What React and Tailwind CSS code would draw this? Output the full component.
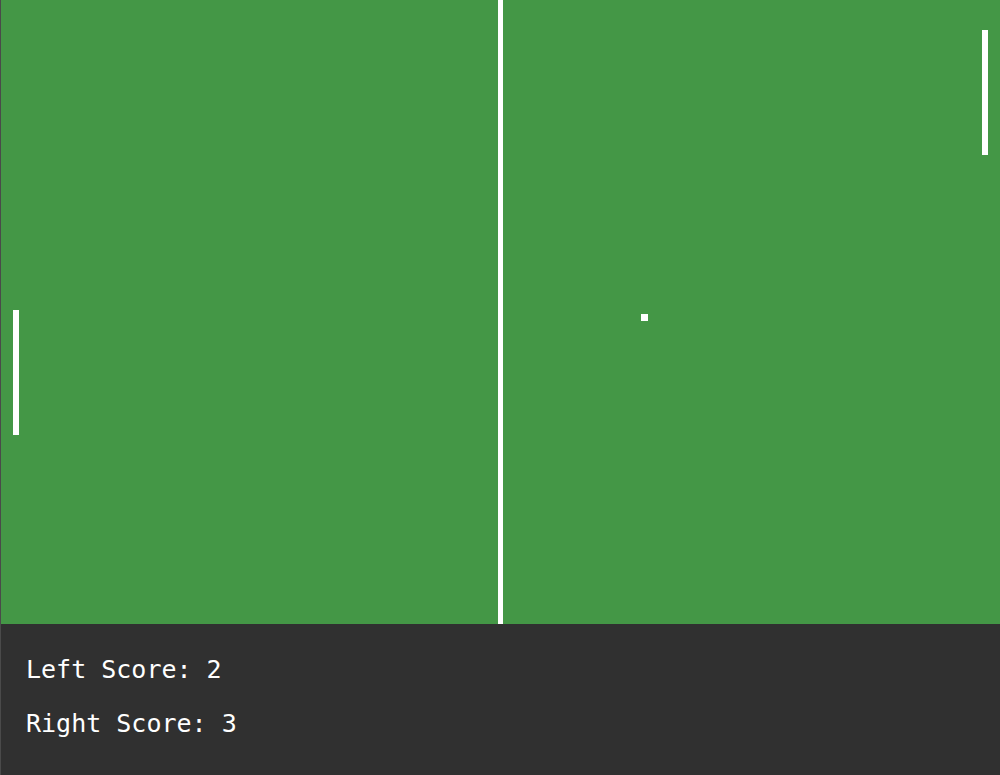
import React from "react";

const App = () => {
  return (
    <div className="w-[1000px] h-[775px] bg-[#303030] flex flex-col border-l border-[#4a4a4a]">
      {/* FIELD */}
      <div className="relative h-[624px] bg-[#449746]">
        <div className="absolute left-[497px] top-0 w-[5px] h-full bg-white"></div>
        <div className="absolute left-[12px] top-[310px] w-[6px] h-[125px] bg-white"></div>
        <div className="absolute left-[981px] top-[30px] w-[6px] h-[125px] bg-white"></div>
        <div className="absolute left-[640px] top-[314px] w-[7px] h-[7px] bg-white"></div>
      </div>

      {/* SCORES */}
      <div className="flex flex-col gap-[24px] pt-[31px] pl-[25px] text-white text-[25px] leading-[30px] font-['DejaVu_Sans_Mono',monospace]">
        <p>Left Score: 2</p>
        <p>Right Score: 3</p>
      </div>
    </div>
  );
};

export default App;
